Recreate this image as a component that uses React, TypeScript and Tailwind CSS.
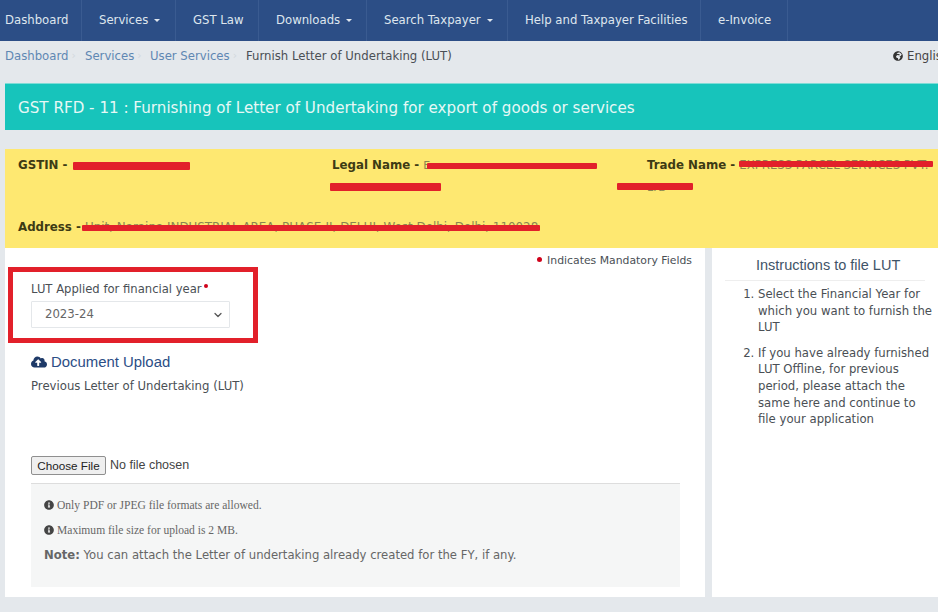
import React from "react";
import { ChevronDown } from "lucide-react";
import { FaCloudUploadAlt, FaInfoCircle, FaGlobeAfrica } from "react-icons/fa";

const navItems: [string, boolean, string][] = [
  ["Dashboard", false, "w-[82px] pl-[5px]"],
  ["Services", true, "w-[94px] pl-[17px]"],
  ["GST Law", false, "w-[83px] pl-[17px]"],
  ["Downloads", true, "w-[108px] pl-[17px]"],
  ["Search Taxpayer", true, "w-[141px] pl-[17px]"],
  ["Help and Taxpayer Facilities", false, "w-[193px] pl-[17px]"],
  ["e-Invoice", false, "w-[87px] pl-[17px]"],
];

const Crumb = ({ t, w }: { t: string; w: string }) => (
  <span className={"flex items-center " + w}>
    <span className="text-[#5f87b3]">{t}</span>
    <span className="text-[#d3d8de] ml-[3px] text-[11px]">›</span>
  </span>
);

function Bar({ className }: { className: string }) {
  return <span className={"absolute h-[7px] bg-[#e2202a] rounded-[1px] " + className} />;
}

export default function App() {
  return (
    <div className="w-[938px] h-[612px] overflow-hidden bg-[#e4e8ec] text-[11.7px] text-[#444] font-['DejaVu_Sans','Liberation_Sans',sans-serif]">
      <nav className="h-[41px] bg-[#2c4e86] flex text-[#dfe6ee]">
        {navItems.map(([t, caret, c]) => (
          <div key={t} className={"h-full flex items-center border-r border-[#3a5b91] whitespace-nowrap " + c}>
            {t}
            {caret && <span className="ml-[6px] w-0 h-0 border-x-[3px] border-x-transparent border-t-[3px] border-t-[#dfe6ee]" />}
          </div>
        ))}
      </nav>

      <div className="h-[42px] pl-[5px] pb-[12px] pt-[1px] flex items-center justify-between whitespace-nowrap">
        <div className="flex items-center">
          <Crumb t="Dashboard" w="w-[80px]" />
          <Crumb t="Services" w="w-[65px]" />
          <Crumb t="User Services" w="w-[96px]" />
          <span className="text-[#4a4f55]">Furnish Letter of Undertaking (LUT)</span>
        </div>
        <div className="flex items-center gap-[4px] w-[45px] overflow-hidden shrink-0 text-[#444]">
          <FaGlobeAfrica className="text-[10px] shrink-0 text-[#333]" />
          <span>English</span>
        </div>
      </div>

      <div className="ml-[5px] h-[47px] pt-[3px] bg-[#17c4bb] border-t border-[#7fdcd6] flex items-center pl-[13px] text-[#e6f8f6] text-[15.15px] whitespace-nowrap">
        GST RFD - 11 : Furnishing of Letter of Undertaking for export of goods or services
      </div>

      <div className="ml-[5px] mt-[19px] h-[99px] bg-[#fee871] pl-[13px] pt-[8px] text-[#3d3b14] text-[11.8px] whitespace-nowrap overflow-hidden">
        <div className="grid grid-cols-[314px_315px_1fr] h-[60px] leading-[17px]">
          <div className="relative">
            <b>GSTIN - </b>
            <Bar className="left-[55px] top-[5px] w-[117px] !h-[8px]" />
          </div>
          <div className="relative">
            <b>Legal Name - </b>
            <span className="text-[#8a8550] text-[11px]">E</span>
            <Bar className="left-[95px] top-[6px] w-[170px] !h-[6px]" />
            <Bar className="left-[-2px] top-[26px] w-[111px] !h-[8px]" />
          </div>
          <div className="relative">
            <b>Trade Name - </b>
            <span className="text-[#8a8550] text-[11.7px]">EXPRESS PARCEL SERVICES PVT.</span>
            <div className="absolute left-0 top-[22px] text-[#8a8550] text-[11px]">LTD</div>
            <Bar className="left-[92px] top-[4px] w-[194px] !h-[6px]" />
            <Bar className="left-[-30px] top-[26px] w-[76px]" />
          </div>
        </div>
        <div className="relative leading-[17px] mt-[2px]">
          <b>Address - </b>
          <span className="text-[#8a8550] text-[11.9px]">Unit, Naraina INDUSTRIAL AREA, PHASE-II, DELHI, West Delhi, Delhi, 110028</span>
          <Bar className="left-[64px] top-[6px] w-[458px] !h-[6px]" />
        </div>
      </div>

      <div className="ml-[5px] flex h-[349px]">
        <section className="w-[700px] bg-white relative pt-[5px] pl-[3px]">
          <div className="absolute right-[13px] top-[5px] flex items-center text-[10.85px] text-[#4a4f55] whitespace-nowrap">
            <span className="w-[5px] h-[5px] rounded-full bg-[#d0021b] mr-[5px] -mt-[3px]" />
            Indicates Mandatory Fields
          </div>
          <div className="mt-[14px] w-[250px] h-[76px] border-[5px] border-[#e2202a] pl-[18px] pt-[10px]">
            <div className="flex text-[#4a4f55] text-[11.6px] leading-[14px] whitespace-nowrap">
              LUT Applied for financial year
              <span className="w-[4px] h-[4px] ml-[2px] mt-[2px] rounded-full bg-[#d0021b]" />
            </div>
            <div className="mt-[5px] w-[199px] h-[27px] pt-[1px] border border-[#e4e7ea] rounded-[1px] flex items-center justify-between pl-[13px] pr-[5px] text-[#666]">
              2023-24
              <ChevronDown size={12} strokeWidth={2.5} className="text-[#555]" />
            </div>
          </div>
          <div className="ml-[23px] mt-[9px] flex items-center gap-[4px] text-[14.9px] text-[#2c4e86] font-['Liberation_Sans',sans-serif] leading-[20px]">
            <FaCloudUploadAlt className="text-[16px] text-[#1e3a68]" />
            Document Upload
          </div>
          <div className="ml-[23px] mt-[6px] text-[#4a4f55] leading-[16px]">Previous Letter of Undertaking (LUT)</div>
          <div className="ml-[23px] mt-[62px] flex items-center h-[19px] font-['Liberation_Sans',sans-serif]">
            <span className="w-[75px] h-[19px] border border-[#8f8f8f] rounded-[2px] bg-[#efefef] text-[#222] flex items-center justify-center">Choose File</span>
            <span className="ml-[4px] text-[#444] text-[12.5px]">No file chosen</span>
          </div>
          <div className="ml-[23px] mt-[8px] w-[649px] h-[104px] border-t border-[#ddd] bg-[#f5f6f6] text-[#666] pl-[13px] pt-[14px]">
            <div className="flex items-center gap-[3px] font-['Liberation_Serif',serif] text-[11.55px] leading-[14px]">
              <FaInfoCircle className="text-[10px] text-[#444]" />
              Only PDF or JPEG file formats are allowed.
            </div>
            <div className="mt-[11px] flex items-center gap-[3px] font-['Liberation_Serif',serif] text-[11.55px] leading-[14px]">
              <FaInfoCircle className="text-[10px] text-[#444]" />
              Maximum file size for upload is 2 MB.
            </div>
            <div className="mt-[10px] leading-[16px] text-[11.65px]"><b>Note:</b> You can attach the Letter of undertaking already created for the FY, if any.</div>
          </div>
        </section>
        <aside className="ml-[7px] w-[226px] bg-white text-[#4a4f55]">
          <h2 className="h-[33px] pt-[3px] mx-[13px] border-b border-[#eee] pl-[31px] flex items-center text-[14.5px] text-[#3f5468] font-['Liberation_Sans',sans-serif] whitespace-nowrap">
            Instructions to file LUT
          </h2>
          <ol className="list-decimal pl-[46px] pr-[4px] pt-[5px] leading-[16.6px]">
            <li className="mb-[9px]">Select the Financial Year for which you want to furnish the LUT</li>
            <li>If you have already furnished LUT Offline, for previous period, please attach the same here and continue to file your application</li>
          </ol>
        </aside>
      </div>
    </div>
  );
}
